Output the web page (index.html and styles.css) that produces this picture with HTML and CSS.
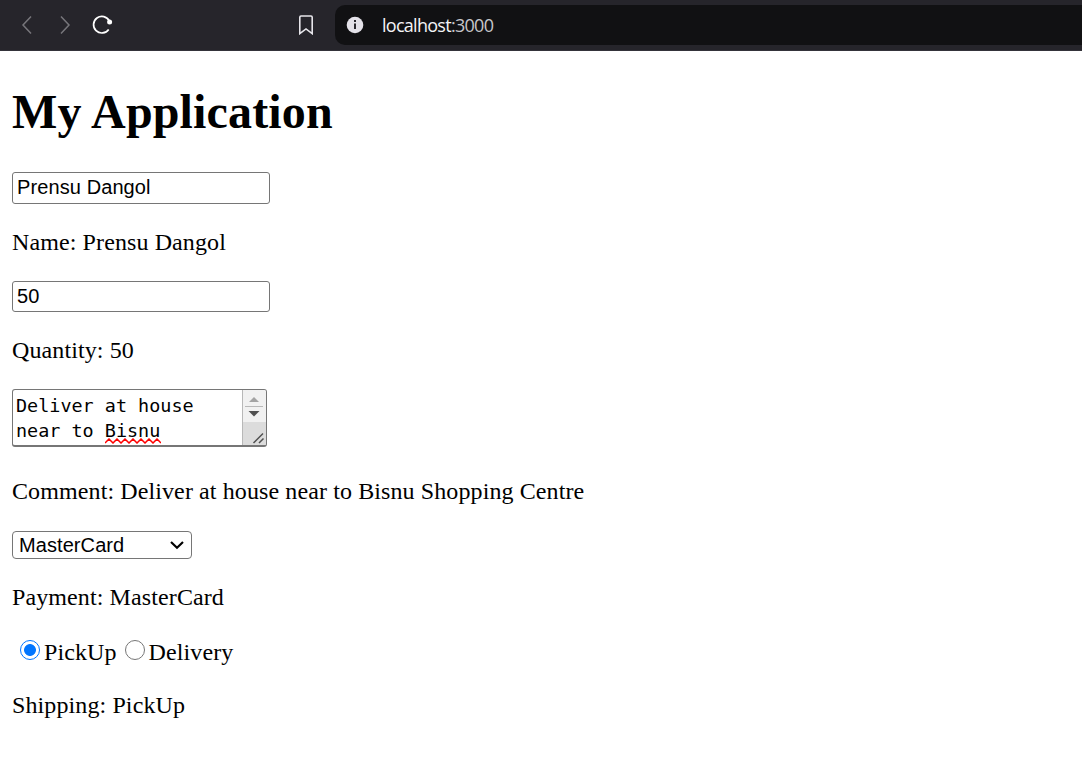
FILE: index.html
```html
<!DOCTYPE html>
<html lang="en">
<head>
<meta charset="utf-8">
<title>My Application</title>
<link rel="stylesheet" href="styles.css">
</head>
<body>
<header class="toolbar">
  <svg class="tool-icon back" width="12" height="20" viewBox="0 0 12 20"><path d="M10 1.500 2 10l8 8.500"/></svg>
  <svg class="tool-icon forward" width="12" height="20" viewBox="0 0 12 20"><path d="M2 1.500 10 10l-8 8.500"/></svg>
  <svg class="reload" width="22" height="22" viewBox="0 0 22 22"><path d="M17.300 7A8.300 8.300 0 1 0 16.700 15.400"/><circle cx="17.600" cy="8.100" r="2.500"/></svg>
  <svg class="bookmark" width="16" height="20" viewBox="0 0 16 20"><path d="M3 1h10q1.200 0 1.200 1.200V18.600L8 13.900 1.800 18.600V2.200Q1.800 1 3 1Z"/></svg>
  <div class="address">
    <svg class="info" width="18" height="18" viewBox="0 0 18 18"><circle cx="9" cy="9" r="8.300"/><path d="M8 4h2v2H8zM8 7.500h2v5.500H8z"/></svg>
    <span class="url">localhost<span class="port">:3000</span></span>
  </div>
</header>
<main class="app">
  <h1 class="title">My Application</h1>
  <input class="field name" type="text" value="Prensu Dangol" aria-label="Name">
  <p class="line">Name: Prensu Dangol</p>
  <input class="field quantity" type="text" value="50" aria-label="Quantity">
  <p class="line">Quantity: 50</p>
  <div class="comment" role="textbox" aria-label="Comment">
    <div class="comment-text">Deliver at house<br>near to <span class="misspelled">Bisnu<svg class="squiggle" width="56" height="6" viewBox="0 0 56 6"><path d="M0 5 4 1l4 4 4-4 4 4 4-4 4 4 4-4 4 4 4-4 4 4 4-4 4 4 4-4 4 4"/></svg></span></div>
    <svg class="scrollbar" width="24" height="56" viewBox="0 0 24 56"><path fill="#f1f1f1" d="M0 0h25v32H0z"/><path fill="#dcdcdc" d="M0 32h25v24H0z"/><path fill="#b8b8b8" d="M0 0h1v56H0zM3 16h18v1H3z"/><path fill="#a3a3a3" d="m7 12 5-5 5 5z"/><path fill="#505050" d="M6.500 21h11l-5.500 5.500z"/><path class="grip" d="m11.500 53 9.500-9.500M17 53l4.500-4.500"/></svg>
  </div>
  <p class="line">Comment: Deliver at house near to Bisnu Shopping Centre</p>
  <div class="select"><span>MasterCard</span><svg class="chevron" width="14" height="10" viewBox="0 0 14 10"><path d="m1 2 6 5.700L13 2"/></svg></div>
  <p class="line">Payment: MasterCard</p>
  <div class="options">
    <label class="option"><input class="radio" type="radio" name="shipping" checked>PickUp</label>
    <label class="option"><input class="radio" type="radio" name="shipping">Delivery</label>
  </div>
  <p class="line">Shipping: PickUp</p>
</main>
</body>
</html>
```
FILE: styles.css
```css
* { box-sizing: border-box; }
body {
  margin: 0;
  height: 776px;
  overflow: hidden;
  background: #fff;
  color: #000;
  font: 24px/28px "Liberation Serif", "Times New Roman", serif;
}
svg { display: block; flex: none; fill: none; }
.toolbar {
  display: flex;
  align-items: center;
  height: 51px;
  background: #26252b;
  border-bottom: 1px solid #34333a;
}
.tool-icon { stroke: #77767b; stroke-width: 1.500; }
.back { margin-left: 21px; }
.forward { margin-left: 26px; }
.reload { margin-left: 21px; stroke: #fff; stroke-width: 1.700; }
.reload circle { fill: #fff; stroke: none; }
.bookmark { margin-left: 184px; stroke: #e6e5ea; stroke-width: 1.600; }
.address {
  display: flex;
  align-items: center;
  flex: 1;
  height: 40px;
  margin-left: 21px;
  padding-left: 11px;
  border-radius: 10px 0 0 10px;
  background: #111113;
}
.info circle { fill: #e4e2e9; }
.info path { fill: #29282d; }
.url {
  margin: 0 0 1px 18px;
  color: #f4f4f6;
  font: 18px/24px "Open Sans", "Noto Sans", sans-serif;
  letter-spacing: -0.720px;
}
.port { color: #c6c6ca; }
.app {
  display: flex;
  flex-direction: column;
  align-items: flex-start;
  padding: 34px 12px 0;
}
.title { margin: 0 0 33px; font-size: 48px; line-height: 54px; letter-spacing: 0.150px; }
.field {
  width: 258px;
  padding: 0 4px 2px;
  border: 1px solid #767676;
  border-radius: 3px;
  background: #fff;
  color: #000;
  outline: 0;
  font: 20px/24px "Liberation Sans", Arial, sans-serif;
  letter-spacing: 0.100px;
}
.name { height: 32px; }
.quantity { height: 31px; padding-bottom: 0; }
.line { margin: 24px 0 25px; white-space: nowrap; letter-spacing: 0.105px; }
.comment {
  display: flex;
  width: 255px;
  height: 58px;
  margin-bottom: 6px;
  border: 1px solid #767676;
  border-bottom-width: 2px;
  border-radius: 3px;
  overflow: hidden;
}
.comment-text {
  flex: 1;
  padding: 3px 0 0 3px;
  white-space: nowrap;
  font: 18.450px/25px "DejaVu Sans Mono", monospace;
}
.misspelled { position: relative; }
.squiggle { position: absolute; left: 0; bottom: -3px; stroke: #f00; stroke-width: 1.500; }
.grip { stroke: #505050; stroke-width: 1.500; }
.select {
  display: flex;
  align-items: center;
  justify-content: space-between;
  width: 180px;
  height: 28px;
  margin-top: 1px;
  padding: 0 7px 0 6px;
  border: 1px solid #767676;
  border-radius: 4px;
  font: 20px/26px "Liberation Sans", Arial, sans-serif;
  letter-spacing: 0.080px;
}
.chevron { stroke: #000; stroke-width: 2.200; }
.options { display: flex; gap: 8px; height: 28px; margin: 2px 0 1px 8px; letter-spacing: 0.100px; }
.option { display: flex; }
.radio {
  appearance: none;
  width: 20px;
  height: 20px;
  margin: 2px 4px 0 0;
  border: 1.500px solid #767676;
  border-radius: 50%;
}
.radio:checked {
  border-color: #0075ff;
  background: radial-gradient(circle, #0075ff 5.500px, #fff 6.300px);
}
```
